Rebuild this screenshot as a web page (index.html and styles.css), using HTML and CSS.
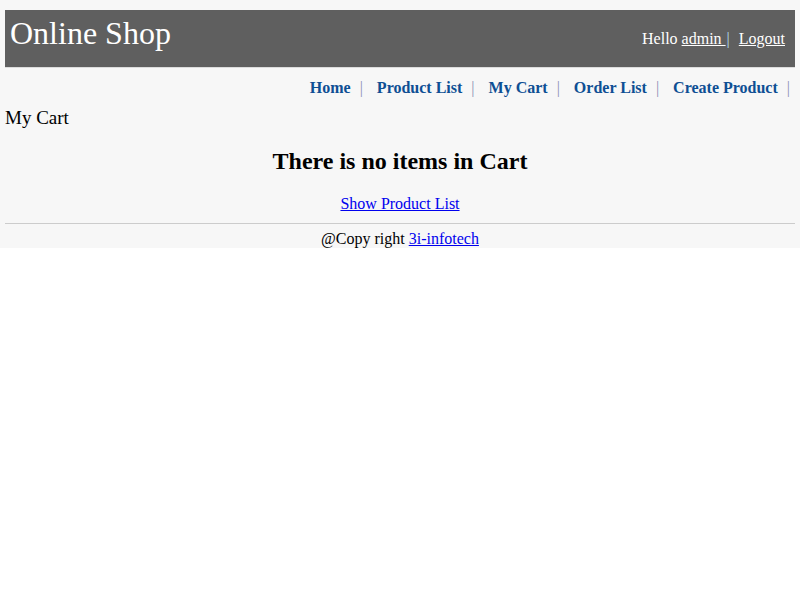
FILE: index.html
```html
<!DOCTYPE html>
<html>
<head>
<meta charset="utf-8">
<title>Online Shop</title>
<link rel="stylesheet" href="styles.css">
</head>
<body>
<div class="page">
  <div class="header">
    <div class="brand">Online Shop</div>
    <div class="user">Hello <a href="#" class="user-link">admin </a> <span class="user-sep">|</span> <a href="#" class="user-link">Logout</a></div>
  </div>
  <div class="nav">
    <a href="#" class="nav-link">Home</a><span class="sep">|</span>
    <a href="#" class="nav-link">Product List</a><span class="sep">|</span>
    <a href="#" class="nav-link">My Cart</a><span class="sep">|</span>
    <a href="#" class="nav-link">Order List</a><span class="sep">|</span>
    <a href="#" class="nav-link">Create Product</a><span class="sep last">|</span>
  </div>
  <div class="page-title">My Cart</div>
  <h2 class="empty">There is no items in Cart</h2>
  <div class="center"><a href="#" class="plain-link">Show Product List</a></div>
  <hr class="rule">
  <div class="footer">@Copy right <a href="#" class="plain-link">3i-infotech</a></div>
</div>
</body>
</html>
```

FILE: styles.css
```css
html, body {
  margin: 0;
  padding: 0;
  background: #ffffff;
}
body {
  font-family: "Liberation Serif", "Times New Roman", serif;
  font-size: 16px;
  color: #000;
}
.page {
  background: #f7f7f7;
  padding: 10px 5px 0;
}
.header {
  background: #5f5f5f;
  border-bottom: 1px solid #dcdcdc;
  display: flex;
  justify-content: space-between;
  align-items: baseline;
  padding: 5px 10px 0 5px;
  box-sizing: border-box;
  height: 58px;
  color: #fff;
}
.brand {
  font-size: 32px;
}
.user {
  font-size: 16px;
}
.user-link {
  color: #fff;
}
.user-sep {
  color: #b5def0;
  margin: 0 5px 0 1px;
}
.nav {
  display: flex;
  justify-content: flex-end;
  align-items: baseline;
  margin-top: 11px;
  font-weight: bold;
}
.nav-link {
  color: #0e4f94;
  text-decoration: none;
  margin-left: 8px;
}
.sep {
  font-weight: normal;
  color: #8c8fb4;
  margin: 0 6px 0 9px;
}
.sep.last {
  margin-right: 5px;
}
.page-title {
  font-size: 19px;
  margin-top: 10px;
}
.empty {
  font-size: 24px;
  font-weight: bold;
  text-align: center;
  margin: 19px 0 0;
}
.center {
  text-align: center;
  margin-top: 20px;
}
.plain-link {
  color: #0000ee;
}
.rule {
  border: 0;
  border-top: 1px solid #cccccc;
  margin: 10px 0 6px;
  height: 0;
}
.footer {
  text-align: center;
}
```
